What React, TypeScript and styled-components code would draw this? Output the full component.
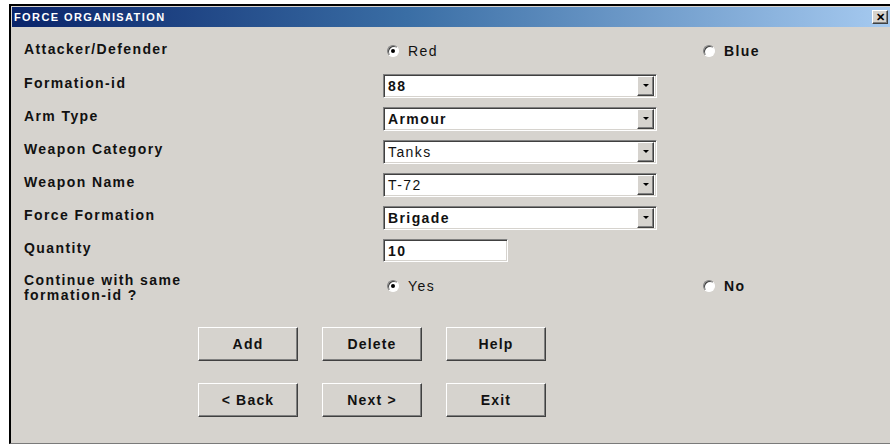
import React from 'react'
import styled, { createGlobalStyle, css } from 'styled-components'

const GlobalStyle = createGlobalStyle`
  html, body {
    margin: 0;
    padding: 0;
    background: #ffffff;
  }
  body {
    font-family: "Liberation Sans", Arial, sans-serif;
  }
`

const FACE = '#d6d3ce'

const bevelOut = css`
  border-top: 1px solid #ffffff;
  border-left: 1px solid #ffffff;
  border-right: 1px solid #404040;
  border-bottom: 1px solid #404040;
  box-shadow: inset -1px -1px 0 #808080;
`

const bevelIn = css`
  border-top: 1px solid #808080;
  border-left: 1px solid #808080;
  border-right: 1px solid #ffffff;
  border-bottom: 1px solid #ffffff;
  box-shadow: inset 1px 1px 0 #404040, inset -1px -1px 0 ${FACE};
`

const STYLED_WINDOW = styled.div`
  margin: 4px 0 0 9px;
  height: 440px;
  box-sizing: border-box;
  border-top: 2px solid #000;
  border-left: 2px solid #000;
  border-bottom: 1px solid #7a7a7a;
  background: ${FACE};
  padding: 1px 0 0 1px;
  display: flex;
  flex-direction: column;
`

const STYLED_TITLE_BAR = styled.div`
  height: 20px;
  display: flex;
  align-items: center;
  justify-content: space-between;
  padding: 0 2px 0 2px;
  background: linear-gradient(to right, #0a246a 0%, #3a6ea5 45%, #a6caf0 100%);
  span {
    color: #fff;
    font-size: 11px;
    font-weight: 700;
    letter-spacing: 1.4px;
  }
`

const STYLED_CLOSE = styled.div`
  width: 16px;
  height: 14px;
  box-sizing: border-box;
  ${bevelOut};
  background: ${FACE};
  display: flex;
  align-items: center;
  justify-content: center;
  font-size: 11px;
  font-weight: 700;
  color: #000;
  line-height: 1;
`

const STYLED_FORM = styled.div`
  padding: 7px 0 0 12px;
  display: flex;
  flex-direction: column;
`

const STYLED_ROW = styled.div<{ $h: number }>`
  height: ${({ $h }) => $h}px;
  display: grid;
  grid-template-columns: 359px 1fr;
  align-items: center;
`

const STYLED_LABEL = styled.div`
  font-size: 14px;
  font-weight: 700;
  letter-spacing: 1.4px;
  color: #111;
  line-height: 15px;
  margin-bottom: 5px;
`

const STYLED_RADIOS = styled.div`
  display: grid;
  grid-template-columns: 316px 1fr;
  margin-left: 4px;
  margin-bottom: 2px;
`

const STYLED_RADIO = styled.label<{ $bold?: boolean }>`
  display: flex;
  align-items: center;
  gap: 9px;
  font-size: 14px;
  letter-spacing: 1.4px;
  font-weight: ${({ $bold }) => ($bold ? 700 : 400)};
  color: #111;
`

const STYLED_DOT = styled.span<{ $on?: boolean }>`
  width: 12px;
  height: 12px;
  border-radius: 50%;
  box-sizing: border-box;
  background: #fff;
  border: 1px solid;
  border-color: #808080 #fff #fff #808080;
  box-shadow: inset 1px 1px 0 #404040;
  display: flex;
  align-items: center;
  justify-content: center;
  &::after {
    content: '';
    width: 4px;
    height: 4px;
    border-radius: 50%;
    background: ${({ $on }) => ($on ? '#000' : 'transparent')};
  }
`

const STYLED_SELECT = styled.div`
  width: 274px;
  height: 24px;
  box-sizing: border-box;
  ${bevelIn};
  background: #fff;
  display: flex;
  align-items: center;
  padding: 2px 2px 2px 0;
`

const STYLED_VALUE = styled.span<{ $bold?: boolean }>`
  flex: 1;
  padding-left: 4px;
  font-size: 14px;
  letter-spacing: 1.4px;
  font-weight: ${({ $bold }) => ($bold ? 700 : 400)};
  color: #111;
`

const STYLED_DROP = styled.span`
  width: 17px;
  height: 20px;
  box-sizing: border-box;
  ${bevelOut};
  background: ${FACE};
  display: flex;
  align-items: center;
  justify-content: center;
  &::after {
    content: '';
    border-left: 3px solid transparent;
    border-right: 3px solid transparent;
    border-top: 3px solid #000;
  }
`

const STYLED_INPUT = styled.div`
  width: 125px;
  height: 23px;
  box-sizing: border-box;
  ${bevelIn};
  background: #fff;
  display: flex;
  align-items: center;
  font-size: 14px;
  font-weight: 700;
  letter-spacing: 1.4px;
  padding-left: 4px;
  color: #111;
`

const STYLED_TWO_LINE = styled(STYLED_LABEL)`
  margin-bottom: 0;
  margin-top: 2px;
`

const STYLED_BUTTONS = styled.div`
  display: grid;
  grid-template-columns: repeat(3, 100px);
  column-gap: 24px;
  row-gap: 22px;
  margin: 20px 0 0 174px;
`

const STYLED_BUTTON = styled.button`
  height: 34px;
  box-sizing: border-box;
  ${bevelOut};
  background: ${FACE};
  font-family: "Liberation Sans", Arial, sans-serif;
  font-size: 14px;
  font-weight: 700;
  letter-spacing: 1.2px;
  color: #111;
  padding: 0;
`

const Select = ({ value, bold }: { value: string; bold?: boolean }) => (
  <STYLED_SELECT>
    <STYLED_VALUE $bold={bold}>{value}</STYLED_VALUE>
    <STYLED_DROP />
  </STYLED_SELECT>
)

const RadioPair = ({ a, b }: { a: string; b: string }) => (
  <STYLED_RADIOS>
    <STYLED_RADIO>
      <STYLED_DOT $on />
      {a}
    </STYLED_RADIO>
    <STYLED_RADIO $bold>
      <STYLED_DOT />
      {b}
    </STYLED_RADIO>
  </STYLED_RADIOS>
)

const selects = [
  { label: 'Formation-id', value: '88', bold: true },
  { label: 'Arm Type', value: 'Armour', bold: true },
  { label: 'Weapon Category', value: 'Tanks' },
  { label: 'Weapon Name', value: 'T-72' },
  { label: 'Force Formation', value: 'Brigade', bold: true },
]

export default function App() {
  return (
    <>
      <GlobalStyle />
      <STYLED_WINDOW>
        <STYLED_TITLE_BAR>
          <span>FORCE ORGANISATION</span>
          <STYLED_CLOSE>✕</STYLED_CLOSE>
        </STYLED_TITLE_BAR>
        <STYLED_FORM>
          <STYLED_ROW $h={35}>
            <STYLED_LABEL>Attacker/Defender</STYLED_LABEL>
            <RadioPair a="Red" b="Blue" />
          </STYLED_ROW>
          {selects.map((s) => (
            <STYLED_ROW $h={33} key={s.label}>
              <STYLED_LABEL>{s.label}</STYLED_LABEL>
              <Select value={s.value} bold={s.bold} />
            </STYLED_ROW>
          ))}
          <STYLED_ROW $h={33}>
            <STYLED_LABEL>Quantity</STYLED_LABEL>
            <STYLED_INPUT>10</STYLED_INPUT>
          </STYLED_ROW>
          <STYLED_ROW $h={40}>
            <STYLED_TWO_LINE>
              Continue with same
              <br />
              formation-id ?
            </STYLED_TWO_LINE>
            <RadioPair a="Yes" b="No" />
          </STYLED_ROW>
          <STYLED_BUTTONS>
            <STYLED_BUTTON>Add</STYLED_BUTTON>
            <STYLED_BUTTON>Delete</STYLED_BUTTON>
            <STYLED_BUTTON>Help</STYLED_BUTTON>
            <STYLED_BUTTON>&lt; Back</STYLED_BUTTON>
            <STYLED_BUTTON>Next &gt;</STYLED_BUTTON>
            <STYLED_BUTTON>Exit</STYLED_BUTTON>
          </STYLED_BUTTONS>
        </STYLED_FORM>
      </STYLED_WINDOW>
    </>
  )
}
